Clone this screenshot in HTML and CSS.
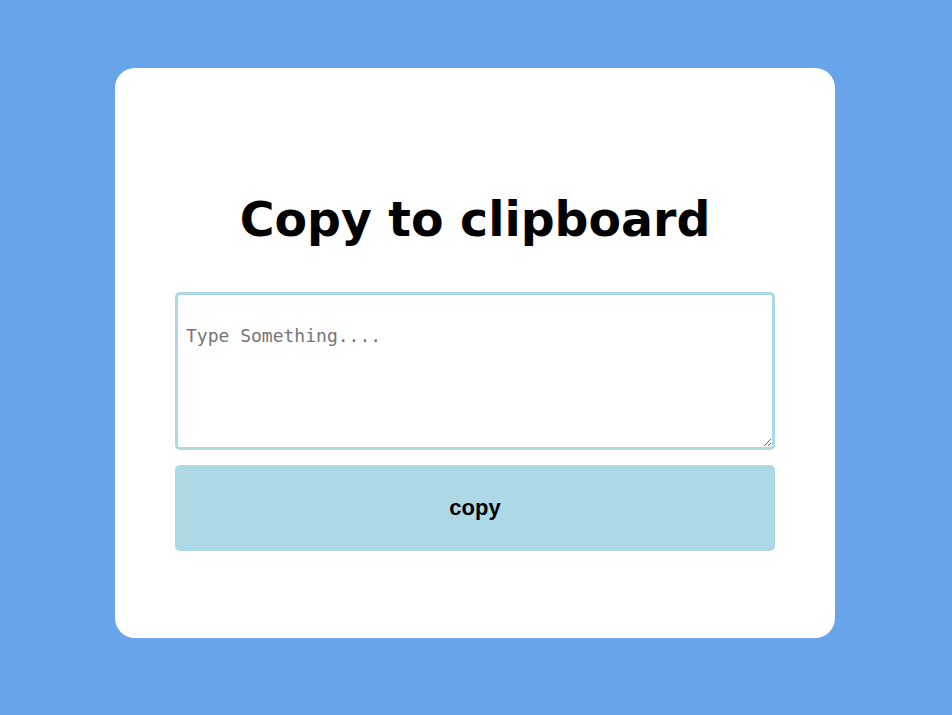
FILE: index.html
```html
<!DOCTYPE html>
<html>
<head>
<meta charset="utf-8">
<link rel="stylesheet" href="styles.css">
</head>
<body>
<div class="card">
  <h1 class="title">Copy to clipboard</h1>
  <textarea class="input" placeholder="Type Something...."></textarea>
  <button class="btn">copy</button>
</div>
</body>
</html>
```
FILE: styles.css
```css
html, body {
  margin: 0;
  height: 100%;
}
body {
  background: #68a4ea;
  padding: 68px 0 0 115px;
  box-sizing: border-box;
}
.card {
  width: 720px;
  height: 570px;
  box-sizing: border-box;
  background: #fff;
  border-radius: 20px;
  padding: 0 60px;
  display: flex;
  flex-direction: column;
}
.title {
  font-family: "DejaVu Sans", sans-serif;
  font-weight: bold;
  font-size: 47.4px;
  line-height: 60px;
  text-align: center;
  margin: 122px 0 42px;
  color: #000;
}
.input {
  width: 600px;
  height: 158px;
  box-sizing: border-box;
  border: 3px solid #add8e6;
  border-radius: 5px;
  padding: 30px 8px 8px;
  font-family: "DejaVu Sans Mono", monospace;
  font-size: 18px;
  outline: none;
  resize: both;
  margin: 0;
}
.input::placeholder {
  color: #757575;
}
.btn {
  margin-top: 15px;
  width: 600px;
  height: 86px;
  background: #add8e6;
  border: none;
  border-radius: 5px;
  font-family: "Liberation Sans", Arial, sans-serif;
  font-weight: bold;
  font-size: 22px;
  color: #000;
}
```
